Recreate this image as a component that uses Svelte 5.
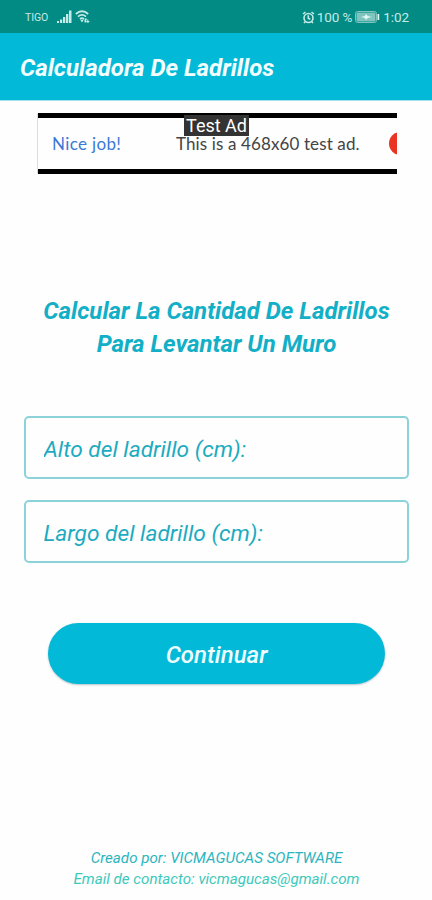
<script lang="ts">
	let alto = '';
	let largo = '';
</script>

<div class="screen">
	<div class="status">
		<span class="carrier">TIGO</span>
		<svg class="signal" width="15" height="14" viewBox="0 0 15 14">
			<path d="M0 11h2v2H0zM3 9.4h2.2V13H3zM6 7h2.3v6H6zM9 4h2.3v9H9zM12 0.5h2.5V13H12z" />
		</svg>
		<svg class="wifi" width="15" height="14" viewBox="0 0 15 14">
			<path d="M0.8 4Q7 -1.4 13.2 4M3 6.6Q7 3.2 11 6.6M5 9Q7 7.3 9 9" />
			<path class="solid" d="M5.2 9.8h3.6L7 12.4zM9.5 12.5v-3l1.5-1.5 1.3 1.5h-1v3zM12.3 9.5h1v1.5h1.4L13 13.3l-1.9-2.3h1.2z" />
		</svg>
		<div class="right">
			<svg class="alarm" width="13" height="13" viewBox="0 0 13 13">
				<circle cx="6.5" cy="7" r="4.5" />
				<path d="M6.3 4.2v3l2 1.2M1 3l2.5-2M12 3L9.5 1M3.2 10.7L2 12M9.8 10.7L11 12" />
			</svg>
			<span class="percent">100 %</span>
			<svg class="battery" width="25" height="12" viewBox="0 0 25 12">
				<rect class="case" x="0.5" y="0.5" width="21" height="11" rx="2" />
				<rect class="level" x="1.5" y="1.5" width="19" height="9" rx="1" />
				<path d="M6 6l4-1 .8-2 2 2 4 1-4 1-2 2L10 7zM22.5 3h1.7v6h-1.7z" />
			</svg>
			<span class="clock">1:02</span>
		</div>
	</div>

	<header><h1>Calculadora De Ladrillos</h1></header>

	<div class="ad">
		<span class="nice">Nice job!</span>
		<span class="desc">This is a 468x60 test ad.</span>
		<span class="dot"></span>
		<span class="label">Test Ad</span>
	</div>

	<h2>
		<span class="first">Calcular La Cantidad De Ladrillos</span>
		<span class="second">Para Levantar Un Muro</span>
	</h2>

	<form on:submit|preventDefault>
		<input type="text" placeholder="Alto del ladrillo (cm):" bind:value={alto} />
		<input type="text" placeholder="Largo del ladrillo (cm):" bind:value={largo} />
		<button>Continuar</button>
	</form>

	<footer>
		<p class="author">Creado por: VICMAGUCAS SOFTWARE</p>
		<p class="mail">Email de contacto: vicmagucas@gmail.com</p>
	</footer>
</div>

<style>
	:global(body) {
		background: #fefefe;
	}

	.screen {
		display: flex;
		flex-direction: column;
		box-sizing: border-box;
		width: 432px;
		height: 900px;
		font-family: Roboto, 'Liberation Sans', sans-serif;
		overflow: hidden;
	}

	.status {
		display: flex;
		align-items: center;
		flex: none;
		box-sizing: border-box;
		height: 33px;
		padding: 1px 23px 0 25px;
		background: #028a84;
		color: #c5ebe7;
	}

	.carrier {
		width: 32px;
		font-size: 10.5px;
		letter-spacing: -0.1px;
	}

	.signal {
		fill: #c5ebe7;
		margin-right: 3px;
	}

	.wifi {
		fill: none;
		stroke: #c5ebe7;
		stroke-width: 1.8;
	}

	.wifi .solid {
		fill: #c5ebe7;
		stroke: none;
	}

	.right {
		display: flex;
		align-items: center;
		margin-left: auto;
		font-size: 13.5px;
		letter-spacing: -0.1px;
	}

	.alarm {
		margin-right: 2px;
		fill: none;
		stroke: #c5ebe7;
		stroke-width: 1.6;
	}

	.battery {
		margin: 0 3px 0 3px;
		fill: #e0f8f5;
	}

	.battery .case {
		fill: none;
		stroke: #7fc4bf;
	}

	.battery .level {
		fill: #7fc4bf;
	}

	header {
		display: flex;
		align-items: center;
		flex: none;
		height: 68px;
		padding: 2px 0 0 20px;
		box-sizing: border-box;
		background: #02b9d7;
		border-bottom: 1px solid #a5e0ea;
	}

	h1,
	h2,
	p {
		margin: 0;
	}

	h1 {
		font-size: 24px;
		font-weight: 700;
		font-style: italic;
		color: #f3feff;
		white-space: nowrap;
	}

	.ad {
		position: relative;
		display: flex;
		align-items: center;
		flex: none;
		box-sizing: border-box;
		width: 360px;
		height: 61px;
		margin: 12px 0 0 37px;
		padding-left: 15px;
		background: linear-gradient(#000 5px, transparent 5px 56px, #000 56px);
		overflow: hidden;
		box-shadow: inset 1px 0 #ddd;
		white-space: nowrap;
		font-family: Lato, Roboto, sans-serif;
		font-size: 17px;
	}

	.nice {
		width: 124px;
		color: #3b78d8;
		letter-spacing: 0.35px;
	}

	.desc {
		color: #444;
		letter-spacing: 0.12px;
	}

	.dot {
		position: absolute;
		left: 352px;
		top: 19px;
		width: 23px;
		height: 23px;
		border-radius: 50%;
		background: #ea3323;
	}

	.label {
		position: absolute;
		left: 147px;
		top: 2px;
		width: 65px;
		height: 21px;
		background: #333;
		color: #fff;
		font-family: Roboto, sans-serif;
		font-size: 18px;
		line-height: 21px;
		text-align: center;
	}

	h2 {
		display: flex;
		flex-direction: column;
		align-items: center;
		flex: none;
		margin: 121px 0 0 1px;
		font-size: 24px;
		line-height: 33px;
		font-weight: 700;
		font-style: italic;
		color: #12afc6;
		white-space: nowrap;
	}

	form {
		display: flex;
		flex-direction: column;
		flex: none;
		margin: 55px 23px 0 24px;
	}

	input {
		box-sizing: border-box;
		width: 100%;
		height: 63px;
		margin: 0 0 21px;
		padding: 3px 17px 0 17.5px;
		border: 2px solid #8bd3d9;
		border-radius: 5px;
		background: #fefefe;
		color: #12afc6;
		font: italic 400 22.7px Roboto, sans-serif;
		outline: none;
	}

	input::placeholder {
		color: #1cabc0;
		opacity: 1;
	}

	button {
		width: 337px;
		height: 61px;
		margin: 39px 0 0 24px;
		padding: 2px 0 0;
		border: none;
		border-radius: 31px;
		background: #02b9d7;
		box-shadow: 0 1px 2px rgba(0, 60, 90, 0.3);
		color: #eefdff;
		font: italic 500 24px Roboto, sans-serif;
	}

	footer {
		display: flex;
		flex-direction: column;
		align-items: center;
		margin: auto 0 0 1px;
		padding-bottom: 10px;
		font-size: 15.15px;
		line-height: 21px;
		font-style: italic;
		white-space: nowrap;
	}

	.author {
		color: #2bb5bf;
	}

	.mail {
		color: #3cc9bb;
	}
</style>
